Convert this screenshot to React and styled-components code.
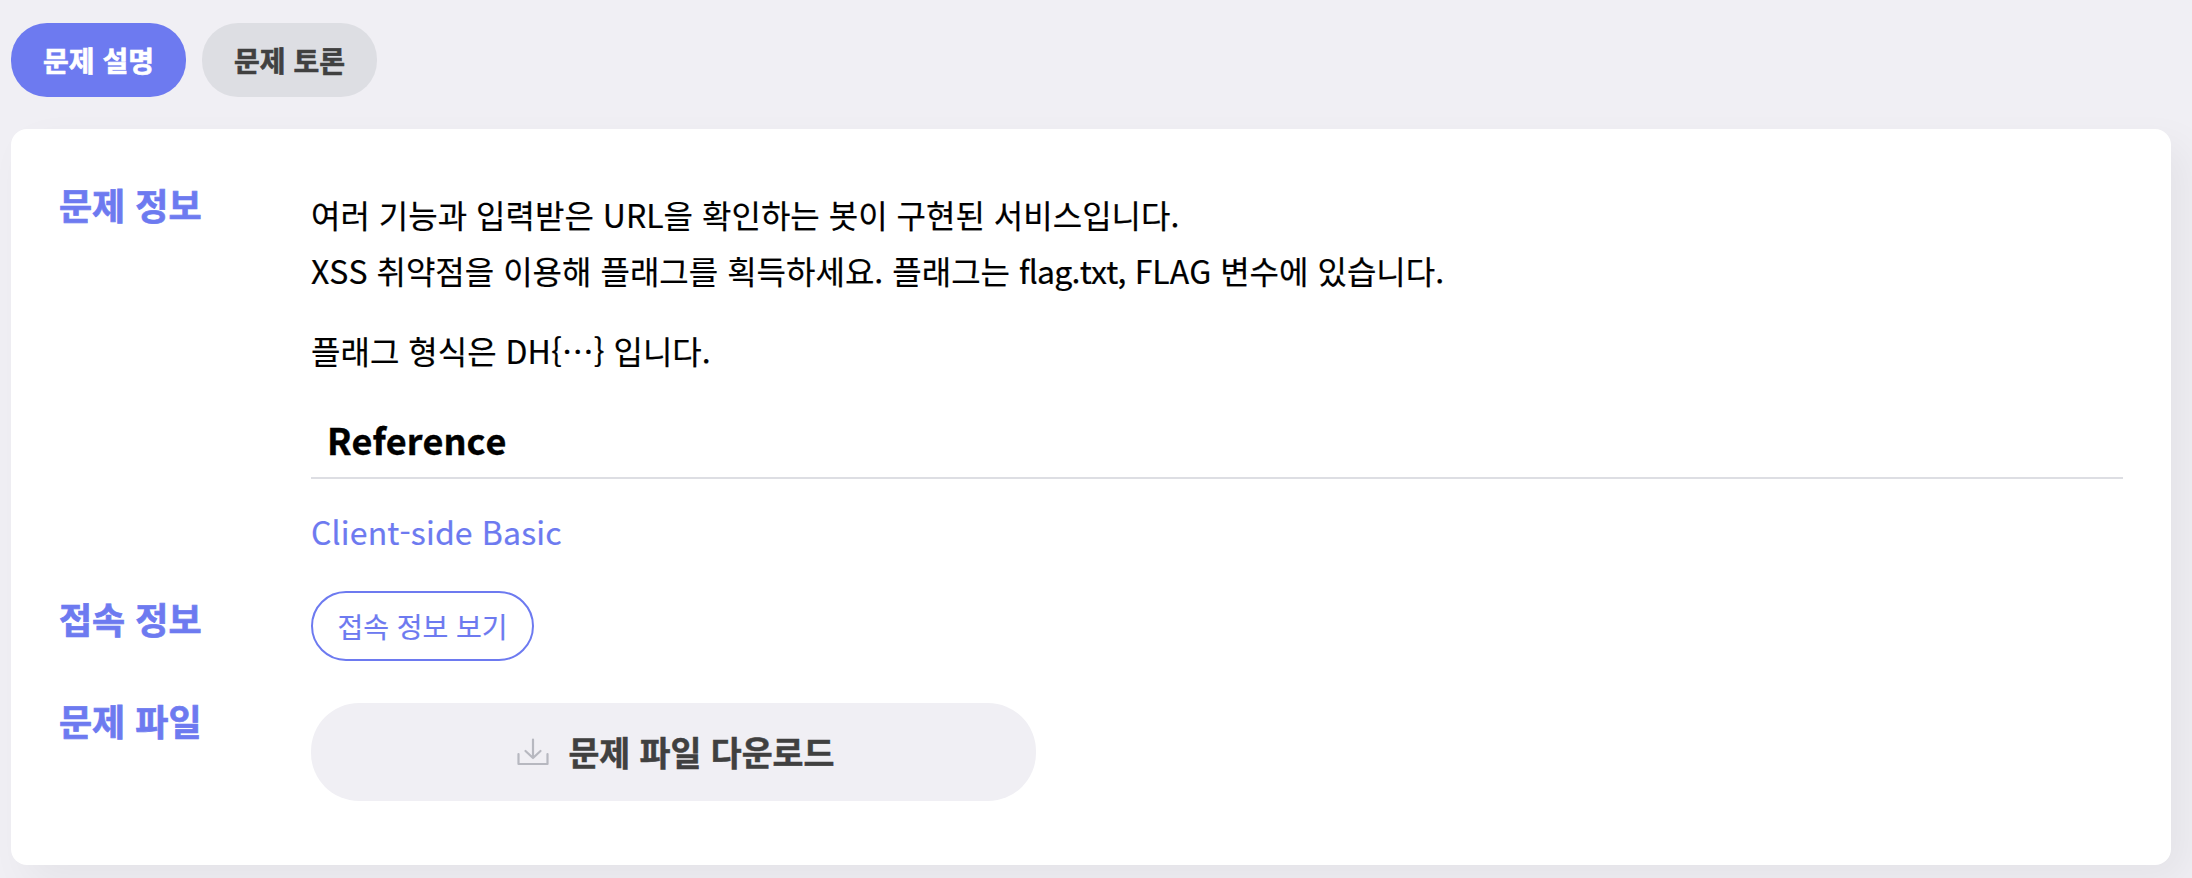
import React, { useState } from "react";
import styled, { createGlobalStyle } from "styled-components";

const GlobalStyle = createGlobalStyle`
  * {
    box-sizing: border-box;
  }
  body {
    margin: 0;
    background-color: #f0eff4;
    font-family: "Noto Sans CJK KR", "Noto Sans", sans-serif;
    color: #000;
    overflow: hidden;
  }
  button {
    font-family: inherit;
    cursor: pointer;
  }
`;

const tabs = ["문제 설명", "문제 토론"];

const DownloadIcon = () => (
  <svg
    width="32"
    height="28"
    viewBox="0 0 32 28"
    fill="none"
    stroke="#b7b8c0"
    strokeWidth="2.2"
    strokeLinecap="round"
    strokeLinejoin="round"
  >
    <path d="M16 1.5v18.5M8.5 13l7.5 7 7.5-7" />
    <path d="M1.5 16v10h29v-10" />
  </svg>
);

const App = () => {
  const [activeTab, setActiveTab] = useState(0);

  return (
    <Wrapper lang="ko">
      <GlobalStyle />
      <TabList>
        {tabs.map((tab, index) => (
          <Tab
            key={tab}
            $active={index === activeTab}
            onClick={() => setActiveTab(index)}
          >
            {tab}
          </Tab>
        ))}
      </TabList>

      <Card>
        <Row>
          <Label>문제 정보</Label>
          <Description>
            <p>
              여러 기능과 입력받은 URL을 확인하는 봇이 구현된 서비스입니다.
              <br />
              XSS 취약점을 이용해 플래그를 획득하세요. 플래그는{" "}
              <FileName>flag.txt,</FileName> FLAG 변수에 있습니다.
            </p>
            <p>플래그 형식은 DH{"{…}"} 입니다.</p>
            <h2>Reference</h2>
            <p>
              <RefLink href="#">Client-side Basic</RefLink>
            </p>
          </Description>
        </Row>
        <Row>
          <Label>접속 정보</Label>
          <OutlineButton>접속 정보 보기</OutlineButton>
        </Row>
        <Row>
          <Label>문제 파일</Label>
          <FileBox>
            <DownloadButton>
              <DownloadIcon />
              <span>문제 파일 다운로드</span>
            </DownloadButton>
          </FileBox>
        </Row>
      </Card>
    </Wrapper>
  );
};

const Wrapper = styled.div`
  height: 878px;
  padding: 23px 21px 0 11px;
`;

const TabList = styled.div`
  display: flex;
  gap: 16px;
  margin-bottom: 32px;
`;

const Tab = styled.button`
  width: 175px;
  height: 74px;
  padding: 0;
  border: none;
  border-radius: 36px;
  font-size: 28px;
  font-weight: 700;
  -webkit-text-stroke: 0.6px;
  color: ${({ $active }) => ($active ? "#fff" : "#404040")};
  background-color: ${({ $active }) => ($active ? "#6d7af0" : "#dddee3")};
`;

const Card = styled.div`
  display: flex;
  flex-direction: column;
  gap: 32px;
  padding: 48px 48px 64px;
  border-radius: 16px;
  background-color: #fff;
  box-shadow: 16px 16px 40px rgba(0, 0, 0, 0.05);
`;

const Row = styled.div`
  display: flex;
  align-items: flex-start;
`;

const Label = styled.div`
  flex: 0 0 252px;
  font-size: 36px;
  font-weight: 700;
  line-height: 54px;
  -webkit-text-stroke: 0.7px;
  color: #6d7af0;
`;

const Description = styled.div`
  flex: 1;
  padding-top: 9px;
  font-size: 32px;
  line-height: 56px;
  font-kerning: none;
  -webkit-text-stroke: 0.2px;
  p {
    margin: 0 0 24px;
    &:last-child {
      margin-bottom: 0;
    }
  }
  h2 {
    margin: 0 0 24px;
    padding: 13px 16px 14px;
    border-bottom: 2px solid #dddee3;
    font-size: 36px;
    font-weight: 700;
    line-height: 48px;
    -webkit-text-stroke: 0.4px;
  }
`;

const FileName = styled.span`
  letter-spacing: -0.75px;
`;

const RefLink = styled.a`
  letter-spacing: 0.15px;
  color: #6d7af0;
  text-decoration: none;
`;

const OutlineButton = styled.button`
  width: 223px;
  height: 70px;
  padding: 0;
  border: 2px solid #6d7af0;
  border-radius: 36px;
  background-color: #fff;
  font-size: 28px;
  -webkit-text-stroke: 0.2px;
  color: #6d7af0;
`;

const FileBox = styled.div`
  flex: 1;
  padding-top: 10px;
`;

const DownloadButton = styled.button`
  display: flex;
  align-items: center;
  justify-content: center;
  gap: 19px;
  width: 40%;
  height: 98px;
  padding: 0 0 1px 5px;
  border: none;
  border-radius: 48px;
  background-color: #f0eff4;
  font-size: 33.6px;
  font-weight: 700;
  -webkit-text-stroke: 0.5px;
  color: #404040;
`;

export default App;
